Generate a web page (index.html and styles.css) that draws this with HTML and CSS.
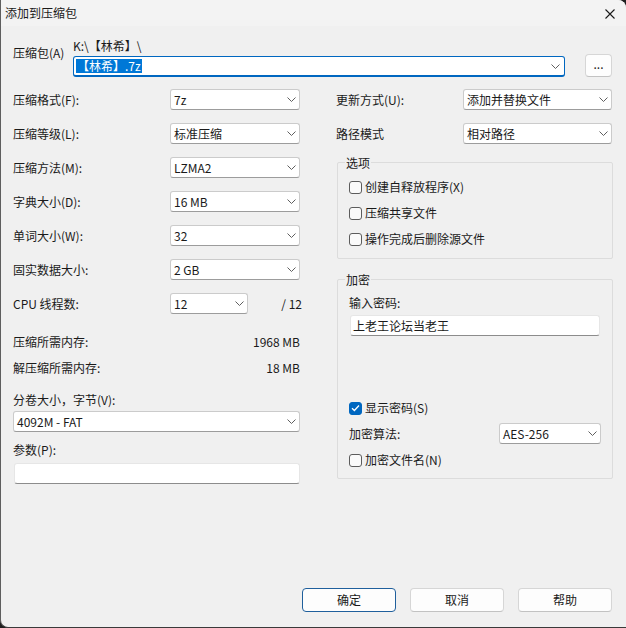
FILE: index.html
```html
<!DOCTYPE html>
<html lang="zh-CN">
<head>
<meta charset="utf-8">
<title>添加到压缩包</title>
<link rel="stylesheet" href="styles.css">
</head>
<body>
<div class="window">
  <div class="titlebar">
    <span class="title">添加到压缩包</span>
    <svg class="close" width="10" height="10" viewBox="0 0 10 10"><path d="M0.5 0.5L9.5 9.5M9.5 0.5L0.5 9.5"/></svg>
  </div>
  <div class="content">
    <div class="archive">
      <div class="archive-label">压缩包(A)</div>
      <div class="archive-main">
        <div class="path">K:\【林希】\</div>
        <div class="combo">
          <span class="selected">【林希】.7z</span>
          <svg class="chev" width="9" height="5" viewBox="0 0 9 5"><path d="M0.5 0.5L4.5 4.5L8.5 0.5"/></svg>
        </div>
      </div>
      <div class="browse">...</div>
    </div>

    <div class="columns">
      <div class="left">
        <div class="field"><span>压缩格式(F):</span><div class="select w130"><span>7z</span><svg class="chev" width="9" height="5" viewBox="0 0 9 5"><path d="M0.5 0.5L4.5 4.5L8.5 0.5"/></svg></div></div>
        <div class="field"><span>压缩等级(L):</span><div class="select w130"><span>标准压缩</span><svg class="chev" width="9" height="5" viewBox="0 0 9 5"><path d="M0.5 0.5L4.5 4.5L8.5 0.5"/></svg></div></div>
        <div class="field"><span>压缩方法(M):</span><div class="select w130"><span>LZMA2</span><svg class="chev" width="9" height="5" viewBox="0 0 9 5"><path d="M0.5 0.5L4.5 4.5L8.5 0.5"/></svg></div></div>
        <div class="field"><span>字典大小(D):</span><div class="select w130"><span>16 MB</span><svg class="chev" width="9" height="5" viewBox="0 0 9 5"><path d="M0.5 0.5L4.5 4.5L8.5 0.5"/></svg></div></div>
        <div class="field"><span>单词大小(W):</span><div class="select w130"><span>32</span><svg class="chev" width="9" height="5" viewBox="0 0 9 5"><path d="M0.5 0.5L4.5 4.5L8.5 0.5"/></svg></div></div>
        <div class="field"><span>固实数据大小:</span><div class="select w130"><span>2 GB</span><svg class="chev" width="9" height="5" viewBox="0 0 9 5"><path d="M0.5 0.5L4.5 4.5L8.5 0.5"/></svg></div></div>
        <div class="field cpu"><span class="cpu-label">CPU 线程数:</span><div class="select w78"><span>12</span><svg class="chev" width="9" height="5" viewBox="0 0 9 5"><path d="M0.5 0.5L4.5 4.5L8.5 0.5"/></svg></div><span class="cpu-max">/ 12</span></div>

        <div class="mem first"><span>压缩所需内存:</span><span>1968 MB</span></div>
        <div class="mem second"><span>解压缩所需内存:</span><span>18 MB</span></div>

        <div class="label vol-label">分卷大小，字节(V):</div>
        <div class="select full"><span>4092M - FAT</span><svg class="chev" width="9" height="5" viewBox="0 0 9 5"><path d="M0.5 0.5L4.5 4.5L8.5 0.5"/></svg></div>
        <div class="label param-label">参数(P):</div>
        <div class="textbox params"></div>
      </div>

      <div class="right">
        <div class="field"><span>更新方式(U):</span><div class="select w149"><span>添加并替换文件</span><svg class="chev" width="9" height="5" viewBox="0 0 9 5"><path d="M0.5 0.5L4.5 4.5L8.5 0.5"/></svg></div></div>
        <div class="field"><span>路径模式</span><div class="select w149"><span>相对路径</span><svg class="chev" width="9" height="5" viewBox="0 0 9 5"><path d="M0.5 0.5L4.5 4.5L8.5 0.5"/></svg></div></div>

        <div class="group options">
          <div class="legend">选项</div>
          <div class="check first"><span class="box"></span><span>创建自释放程序(X)</span></div>
          <div class="check"><span class="box"></span><span>压缩共享文件</span></div>
          <div class="check"><span class="box"></span><span>操作完成后删除源文件</span></div>
        </div>

        <div class="group encrypt">
          <div class="legend">加密</div>
          <div class="label pw-label">输入密码:</div>
          <div class="textbox password">上老王论坛当老王</div>
          <div class="check show-pw"><span class="box checked"><svg width="9" height="8" viewBox="0 0 9 8"><path d="M1 4.2L3.4 6.5L8 1.5"/></svg></span><span>显示密码(S)</span></div>
          <div class="enc-row"><span>加密算法:</span><div class="select w102"><span>AES-256</span><svg class="chev" width="9" height="5" viewBox="0 0 9 5"><path d="M0.5 0.5L4.5 4.5L8.5 0.5"/></svg></div></div>
          <div class="check enc-names"><span class="box"></span><span>加密文件名(N)</span></div>
        </div>
      </div>
    </div>

    <div class="buttons">
      <div class="btn default">确定</div>
      <div class="btn">取消</div>
      <div class="btn">帮助</div>
    </div>
  </div>
</div>
</body>
</html>
```

FILE: styles.css
```css
html, body {
  margin: 0;
  padding: 0;
  background: #1f1f1f;
}

body {
  font-family: "Noto Sans CJK SC", "Microsoft YaHei", sans-serif;
  font-size: 12px;
  color: #1a1a1a;
}

.window {
  width: 626px;
  height: 628px;
  box-sizing: border-box;
  background: #f0f0f0;
  border-left: 1px solid #5e5e5e;
  border-bottom: 1px solid #3a3a3a;
  border-radius: 0 8px 0 8px;
  overflow: hidden;
}

.titlebar {
  height: 26px;
  background: #f3f3f3;
  display: flex;
  align-items: center;
  justify-content: space-between;
  padding: 0 11px 0 4px;
}

.title {
  line-height: 25px;
  margin-top: -1px;
}

.close {
  margin-top: 1px;
}

.close path {
  stroke: #1a1a1a;
  stroke-width: 1.1;
  fill: none;
}

.content {
  padding: 13px 13px 0 12px;
}

/* archive row */
.archive {
  display: flex;
  align-items: flex-start;
}

.archive-label {
  width: 60px;
  line-height: 16px;
  margin-top: 6px;
  flex: none;
}

.archive-main {
  flex: 1;
}

.path {
  line-height: 14px;
  margin-bottom: 3px;
}

.combo {
  height: 21px;
  box-sizing: border-box;
  background: #ffffff;
  border: 1px solid #0067c0;
  border-bottom-width: 2px;
  border-radius: 3px;
  display: flex;
  align-items: center;
  justify-content: space-between;
  padding: 0 4px 0 2px;
}

.selected {
  background: #0078d7;
  color: #ffffff;
  line-height: 14px;
  padding: 0 1px;
}

.browse {
  width: 27px;
  height: 23px;
  box-sizing: border-box;
  margin: 15px 1px 0 20px;
  background: #fdfdfd;
  border: 1px solid #d6d6d6;
  border-bottom-color: #c2c2c2;
  border-radius: 4px;
  text-align: center;
  line-height: 18px;
  flex: none;
}

.chev path {
  stroke: #5f5f5f;
  stroke-width: 1;
  fill: none;
}

/* columns */
.columns {
  display: flex;
  gap: 36px;
  margin-top: 12px;
}

.left {
  width: 287px;
  flex: none;
}

.right {
  width: 277px;
  flex: none;
}

.field {
  display: flex;
  align-items: center;
  justify-content: space-between;
  height: 21px;
  margin-bottom: 13px;
}

.right .field {
  padding-right: 1px;
}

.select {
  height: 21px;
  box-sizing: border-box;
  background: #ffffff;
  border: 1px solid #cbcbcb;
  border-bottom-color: #9c9c9c;
  border-radius: 3px;
  display: flex;
  align-items: center;
  justify-content: space-between;
  padding: 0 3px 0 3px;
  flex: none;
}

.w130 { width: 130px; }
.w78 { width: 78px; }
.w149 { width: 149px; }
.w102 { width: 102px; }

.cpu-label {
  width: 157px;
  flex: none;
}

.cpu-max {
  margin-left: auto;
  margin-right: -2px;
}

.mem {
  display: flex;
  justify-content: space-between;
  line-height: 16px;
}

.mem.first {
  margin-top: 20px;
}

.mem.second {
  margin-top: 10px;
}

.label {
  line-height: 16px;
}

.vol-label {
  margin-top: 16px;
  margin-bottom: 3px;
}

.select.full {
  width: 287px;
}

.param-label {
  margin-top: 10px;
  margin-bottom: 5px;
}

.textbox {
  height: 21px;
  box-sizing: border-box;
  background: #ffffff;
  border: 1px solid #e6e6e6;
  border-bottom-color: #8c8c8c;
  border-radius: 3px;
  line-height: 19px;
  padding-left: 2px;
}

.params {
  width: 286px;
  margin-left: 1px;
}

/* groups */
.group {
  margin-left: 1px;
  border: 1px solid #dcdcdc;
  border-radius: 2px;
  padding: 0 0 0 11px;
}

.options {
  margin-top: 18px;
  padding-bottom: 11px;
}

.encrypt {
  margin-top: 20px;
  padding-bottom: 10px;
}

.legend {
  width: fit-content;
  margin: -8px 0 0 -4px;
  padding: 0 1px;
  background: #f0f0f0;
  line-height: 16px;
}

.check {
  display: flex;
  align-items: center;
  gap: 3px;
  line-height: 16px;
  margin-top: 10px;
}

.check.first {
  margin-top: 8px;
}

.box {
  width: 13px;
  height: 13px;
  box-sizing: border-box;
  border: 1px solid #5c5c5c;
  border-radius: 3px;
  background: #fafafa;
  flex: none;
  display: flex;
  align-items: center;
  justify-content: center;
}

.box.checked {
  background: #0067c0;
  border-color: #0067c0;
}

.box.checked path {
  stroke: #ffffff;
  stroke-width: 1.3;
  fill: none;
}

.pw-label {
  margin-top: 7px;
}

.password {
  width: 250px;
  margin-top: 4px;
  margin-left: 1px;
}

.show-pw {
  margin-top: 64px;
}

.enc-row {
  display: flex;
  align-items: center;
  height: 21px;
  margin-top: 7px;
}

.enc-row > span {
  width: 150px;
  flex: none;
}

.enc-names {
  margin-top: 8px;
}

/* buttons */
.buttons {
  display: flex;
  justify-content: flex-end;
  gap: 14px;
  margin-top: 104px;
  padding-right: 1px;
}

.btn {
  width: 94px;
  height: 24px;
  box-sizing: border-box;
  background: #fdfdfd;
  border: 1px solid #d6d6d6;
  border-bottom-color: #c2c2c2;
  border-radius: 4px;
  text-align: center;
  line-height: 22px;
}

.btn.default {
  border: 1px solid #1f5f9c;
}
```
